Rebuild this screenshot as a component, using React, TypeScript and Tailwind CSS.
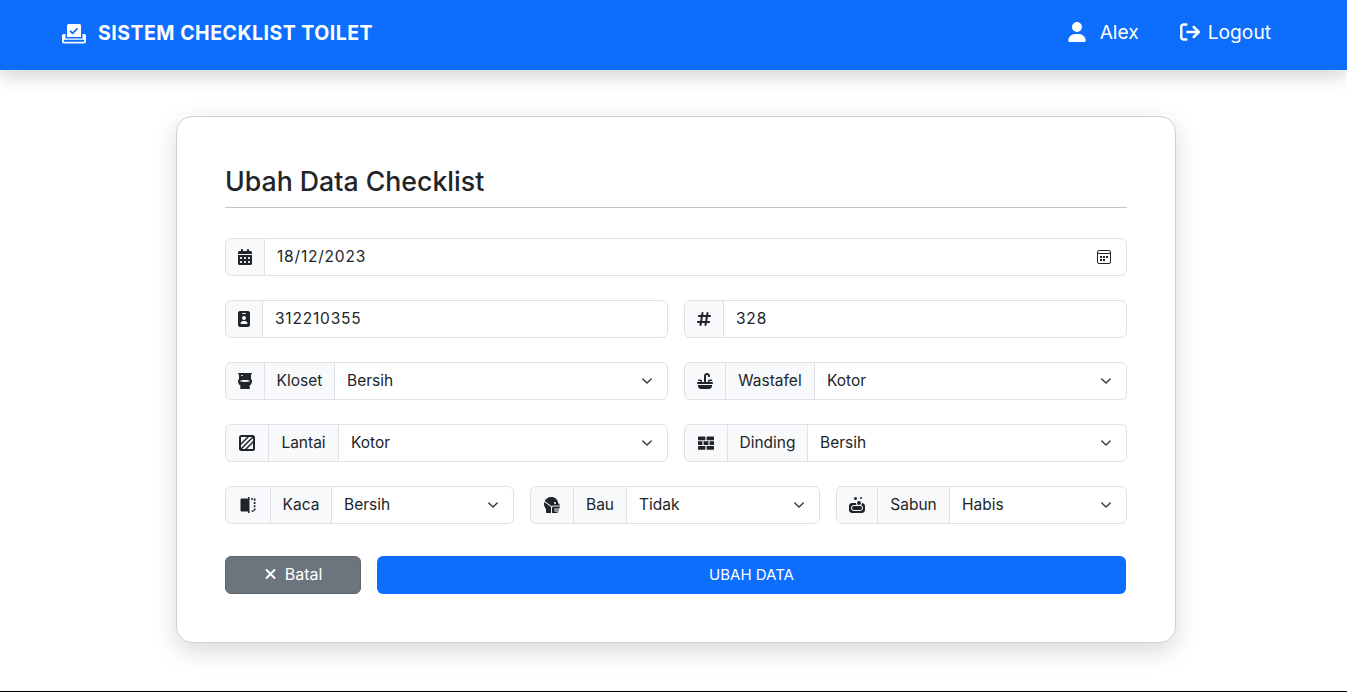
import type { ReactNode } from "react";
import {
  FaArrowRightFromBracket,
  FaCalendarDays,
  FaHashtag,
  FaHeadSideMask,
  FaIdBadge,
  FaSink,
  FaSoap,
  FaToilet,
  FaUser,
  FaXmark,
} from "react-icons/fa6";

function LogoIcon() {
  return (
    <svg viewBox="0 0 24 20" className="w-6 h-5" fill="white">
      <path d="M5 1.5A1.5 1.5 0 0 1 6.5 0h11A1.5 1.5 0 0 1 19 1.5V13H5z" />
      <path d="M8 6.8l2.6 2.6 5-5" fill="none" stroke="#0d6efd" strokeWidth="1.7" />
      <path d="M1.5 10H3.5v4.5h17V10h2A1.5 1.5 0 0 1 24 11.5v6A2 2 0 0 1 22 19.5H2a2 2 0 0 1-2-2v-6A1.5 1.5 0 0 1 1.5 10z" />
      <rect x="1.8" y="15.8" width="20.4" height="2" rx="0.6" fill="#0d6efd" />
    </svg>
  );
}

function FloorIcon() {
  return (
    <svg viewBox="0 0 16 16" className="w-4 h-4" fill="none" stroke="#212529">
      <rect x="1" y="1" width="14" height="14" rx="1.5" strokeWidth="2" />
      <path d="M1.5 9.5 9.5 1.5M1.5 14.5 14.5 1.5M6.5 14.5 14.5 6.5" strokeWidth="1.5" />
    </svg>
  );
}

function WallIcon() {
  return (
    <svg viewBox="0 0 16 14" className="w-4 h-[14px]" fill="#212529">
      <rect x="0" y="0.5" width="7.4" height="3.8" rx="0.6" />
      <rect x="8.6" y="0.5" width="7.4" height="3.8" rx="0.6" />
      <rect x="0" y="5.2" width="4.4" height="3.8" />
      <rect x="5.6" y="5.2" width="4.8" height="3.8" />
      <rect x="11.6" y="5.2" width="4.4" height="3.8" />
      <rect x="0" y="9.9" width="7.4" height="3.8" rx="0.6" />
      <rect x="8.6" y="9.9" width="7.4" height="3.8" rx="0.6" />
    </svg>
  );
}

function MirrorIcon() {
  return (
    <svg viewBox="0 0 16 16" className="w-4 h-4">
      <path d="M1.5 1.5H8V14.5H1.5a1 1 0 0 1-1-1v-11a1 1 0 0 1 1-1z" fill="#212529" />
      <rect x="8" y="0" width="1.5" height="16" fill="#212529" />
      <path d="M11 2h3.6v12H11" fill="none" stroke="#212529" strokeWidth="1.7" strokeDasharray="2 1.3" />
    </svg>
  );
}

function PickerIcon() {
  return (
    <svg viewBox="0 0 14 14" className="w-[14px] h-[14px]">
      <rect x="0.5" y="0.5" width="13" height="13" rx="1.5" fill="none" stroke="#212529" />
      <path d="M0.5 3.5h13" stroke="#212529" />
      <path d="M3 6h2v2H3zM6 6h2v2H6zM9 6h2v2H9zM3 9h2v2H3zM6 9h2v2H6z" fill="#212529" />
    </svg>
  );
}

function Addon({ width, children }: { width: string; children: ReactNode }) {
  return (
    <span
      className={`${width} shrink-0 flex items-center justify-center bg-[#f8f9fa] border border-[#dee2e6] -mr-px first:rounded-l-md text-[15.5px]`}
    >
      {children}
    </span>
  );
}

function TextField({ icon, iconWidth, value, picker }: { icon: ReactNode; iconWidth: string; value: string; picker?: boolean }) {
  return (
    <div className="flex h-[38px] min-w-0">
      <Addon width={iconWidth}>{icon}</Addon>
      <div className="relative flex-1 min-w-0">
        <input
          readOnly
          value={value}
          className="w-full h-full pl-3 pr-3 pb-[2px] border border-[#dee2e6] rounded-r-md bg-white text-[15.5px] tracking-[0.8px] text-[#212529] outline-none"
        />
        {picker && (
          <span className="absolute right-4 top-3">
            <PickerIcon />
          </span>
        )}
      </div>
    </div>
  );
}

function SelectField({
  icon,
  iconWidth,
  label,
  labelWidth,
  value,
  options,
}: {
  icon: ReactNode;
  iconWidth: string;
  label: string;
  labelWidth: string;
  value: string;
  options: string[];
}) {
  return (
    <div className="flex h-[38px] min-w-0">
      <Addon width={iconWidth}>{icon}</Addon>
      <Addon width={labelWidth}>{label}</Addon>
      <div className="relative flex-1 min-w-0">
        <select
          defaultValue={value}
          className="w-full h-full pl-3 pr-9 appearance-none border border-[#dee2e6] rounded-r-md bg-white text-[15.5px] text-[#212529] outline-none"
        >
          {options.map((o) => (
            <option key={o}>{o}</option>
          ))}
        </select>
        <svg viewBox="0 0 16 16" className="absolute right-[13px] top-[11px] w-4 h-4 pointer-events-none" fill="none">
          <path d="m2 5 6 6 6-6" stroke="#343a40" strokeWidth="2" strokeLinecap="round" strokeLinejoin="round" transform="translate(2.4 2.4) scale(0.7)" />
        </svg>
      </div>
    </div>
  );
}

const KONDISI = ["Bersih", "Kotor"];

export default function App() {
  return (
    <div className="bg-white text-[#212529] font-['Inter','Noto_Sans',sans-serif]">
      {/* Navbar */}
      <nav className="h-[70px] bg-[#0d6efd] text-white flex items-center justify-between pb-[2px] pl-[62px] pr-[76px] shadow-[0_8px_16px_rgba(0,0,0,0.15)] relative">
        <div className="flex items-center gap-3">
          <LogoIcon />
          <span className="text-[19.5px] font-bold tracking-[0.5px] uppercase">Sistem Checklist Toilet</span>
        </div>
        <div className="flex items-center text-[19.2px] mb-[3px]">
          <FaUser className="w-5 h-5 mr-[13px]" />
          <span>Alex</span>
          <FaArrowRightFromBracket className="w-5 h-5 ml-[41px] mr-2" />
          <span>Logout</span>
        </div>
      </nav>

      {/* Form card */}
      <main className="h-[621px] pt-[46px] pl-[176px]">
        <div className="w-[1000px] h-[527px] bg-white border border-[#cfcfcf] rounded-2xl shadow-[0_8px_24px_rgba(0,0,0,0.15)] pt-[48px] px-[48px]">
          <h1 className="text-[26.7px] font-medium leading-[32px] pb-[10px] border-b border-[#c4c4c4] text-[#212529]">
            Ubah Data Checklist
          </h1>

          <div className="mt-[30px] flex flex-col gap-6">
            <TextField icon={<FaCalendarDays className="w-[14px] h-4" />} iconWidth="w-10" value="18/12/2023" picker />

            <div className="grid grid-cols-2 gap-4">
              <TextField icon={<FaIdBadge className="w-3 h-4" />} iconWidth="w-[38px]" value="312210355" />
              <TextField icon={<FaHashtag className="w-[14px] h-4" />} iconWidth="w-10" value="328" />
            </div>

            <div className="grid grid-cols-2 gap-4">
              <SelectField icon={<FaToilet className="w-[14px] h-4" />} iconWidth="w-10" label="Kloset" labelWidth="w-[71px]" value="Bersih" options={KONDISI} />
              <SelectField icon={<FaSink className="w-4 h-4" />} iconWidth="w-[42px]" label="Wastafel" labelWidth="w-[90px]" value="Kotor" options={KONDISI} />
            </div>

            <div className="grid grid-cols-2 gap-4">
              <SelectField icon={<FloorIcon />} iconWidth="w-11" label="Lantai" labelWidth="w-[71px]" value="Kotor" options={KONDISI} />
              <SelectField icon={<WallIcon />} iconWidth="w-11" label="Dinding" labelWidth="w-[81px]" value="Bersih" options={KONDISI} />
            </div>

            <div className="grid grid-cols-[289px_290px_291px] gap-4">
              <SelectField icon={<MirrorIcon />} iconWidth="w-[46px]" label="Kaca" labelWidth="w-[62px]" value="Bersih" options={KONDISI} />
              <SelectField icon={<FaHeadSideMask className="w-[18px] h-4" />} iconWidth="w-11" label="Bau" labelWidth="w-[54px]" value="Tidak" options={["Tidak", "Ya"]} />
              <SelectField icon={<FaSoap className="w-4 h-4" />} iconWidth="w-[42px]" label="Sabun" labelWidth="w-[73px]" value="Habis" options={["Habis", "Ada"]} />
            </div>
          </div>

          <div className="mt-8 flex gap-4 pr-px">
            <button type="button" className="w-[136px] h-[38px] pb-[2px] flex items-center justify-center gap-2 bg-[#6c757d] border border-[#5f676e] rounded-md text-white text-[16px]">
              <FaXmark className="w-[13px] h-4" />
              Batal
            </button>
            <button type="submit" className="flex-1 h-[38px] bg-[#0d6efd] rounded-md text-white text-[15px]">
              UBAH DATA
            </button>
          </div>
        </div>
      </main>

      <footer className="h-px bg-black" />
    </div>
  );
}
